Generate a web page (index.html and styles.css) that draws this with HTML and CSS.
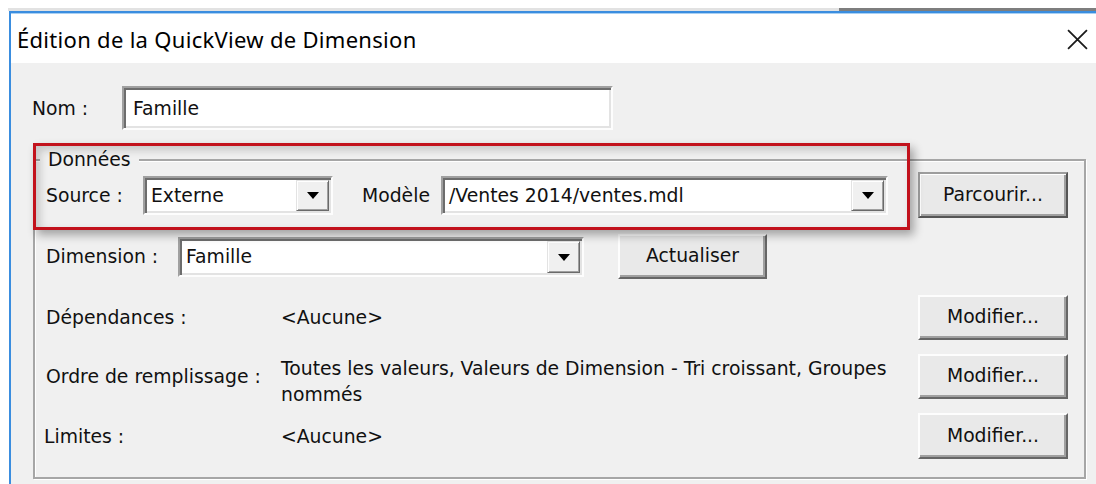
FILE: index.html
```html
<!DOCTYPE html>
<html lang="fr">
<head>
<meta charset="utf-8">
<title>Édition de la QuickView de Dimension</title>
<link rel="stylesheet" href="styles.css">
</head>
<body>
<div class="desk">
  <div class="behind"><span class="behind-light"></span><span class="behind-dark"></span></div>
  <div class="window">
    <div class="titlebar">
      <span class="title">Édition de la QuickView de Dimension</span>
      <svg class="close" viewBox="0 0 20 20" aria-label="Fermer">
        <path d="M1 1 L19 19 M19 1 L1 19" />
      </svg>
    </div>
    <div class="content">
      <div class="name-row">
        <span class="name-label">Nom :</span>
        <div class="field name-field">Famille</div>
      </div>

      <fieldset class="group">
        <legend>Données</legend>
        <div class="group-body">
          <div class="row row-source">
            <span class="source-label">Source :</span>
            <div class="field combo combo-source">
              <span class="combo-value">Externe</span>
              <span class="combo-btn"><i class="arrow"></i></span>
            </div>
            <span class="model-label">Modèle</span>
            <div class="field combo combo-model">
              <span class="combo-value">/Ventes 2014/ventes.mdl</span>
              <span class="combo-btn"><i class="arrow"></i></span>
            </div>
            <button class="btn btn-default btn-browse">Parcourir...</button>
          </div>

          <div class="row row-dimension">
            <span class="dimension-label">Dimension :</span>
            <div class="field combo combo-dimension">
              <span class="combo-value">Famille</span>
              <span class="combo-btn"><i class="arrow"></i></span>
            </div>
            <button class="btn btn-refresh">Actualiser</button>
          </div>

          <div class="props">
            <span class="prop-label">Dépendances :</span>
            <span class="prop-value">&lt;Aucune&gt;</span>
            <button class="btn btn-edit">Modifier...</button>

            <span class="prop-label">Ordre de remplissage :</span>
            <span class="prop-value prop-multi">Toutes les valeurs, Valeurs de Dimension - Tri croissant, Groupes<br>nommés</span>
            <button class="btn btn-edit">Modifier...</button>

            <span class="prop-label prop-label-tight">Limites :</span>
            <span class="prop-value">&lt;Aucune&gt;</span>
            <button class="btn btn-edit">Modifier...</button>
          </div>
        </div>
      </fieldset>

      <div class="highlight"></div>
    </div>
  </div>
</div>
</body>
</html>
```

FILE: styles.css
```css
html, body {
  margin: 0;
  height: 100%;
  overflow: hidden;
  background: #ffffff;
}

body {
  font-family: "DejaVu Sans", "Liberation Sans", sans-serif;
  font-size: 18.8px;
  color: #111;
}

/* desktop area with the edge of another window behind the dialog */
.desk {
  display: flex;
  flex-direction: column;
  height: 100%;
  padding: 8px 0 0 8px;
  box-sizing: border-box;
}

.behind {
  display: flex;
  height: 3px;
  flex: none;
}

.behind-light {
  width: 831px;
  background: #e2e2e2;
}

.behind-dark {
  flex: 1;
  background: #7e7e7e;
}

/* dialog window */
.window {
  flex: 1;
  display: flex;
  flex-direction: column;
  margin-left: 1px;
  border-top: 2px solid #3a8ddf;
  border-left: 2px solid #3a8ddf;
  min-height: 0;
}

.titlebar {
  flex: none;
  height: 50px;
  background: #fff;
  display: flex;
  align-items: center;
  justify-content: space-between;
  padding: 0 8px 0 6px;
  box-shadow: inset 0 1px 0 #a9d0f3;
}

.title {
  font-family: "Noto Sans", "Open Sans", sans-serif;
  font-size: 22px;
  letter-spacing: 0.3px;
  color: #000;
  padding-top: 1px;
}

.close {
  width: 21px;
  height: 21px;
  margin-top: 2px;
}

.close path {
  stroke: #1b1b1b;
  stroke-width: 1.7;
  fill: none;
}

.content {
  position: relative;
  flex: 1;
  background: #f0f0f0;
  padding: 23px 10px 0 21px;
}

/* sunken text fields and combo boxes */
.field {
  box-sizing: border-box;
  background: #fff;
  border: 2px solid;
  border-color: #a0a0a0 #fdfdfd #fdfdfd #a0a0a0;
  box-shadow: inset 2px 2px 0 #6d6d6d, inset -2px -2px 0 #e3e3e3;
  display: flex;
  align-items: center;
}

.name-row {
  display: flex;
  align-items: center;
}

.name-label {
  width: 90px;
}

.name-field {
  width: 491px;
  height: 44px;
  padding-left: 9px;
}

/* group box */
.group {
  margin: 19px 0 0 1px;
  padding: 0;
  min-width: 0;
  border: 2px solid #a6a6a6;
  box-shadow: 1px 1px 0 #fff, inset 1px 1px 0 #fff;
}

.group legend {
  margin-left: 5px;
  padding: 0 8px;
  line-height: 22px;
  background: #f0f0f0;
}

.group-body {
  padding: 1px 16px 18px 11px;
}

.row {
  display: flex;
  align-items: center;
}

.row-source {
  height: 46px;
}

.source-label {
  width: 97px;
}

.combo {
  padding: 2px 2px 2px 6px;
  justify-content: space-between;
}

.combo-value {
  white-space: nowrap;
}

.combo-btn {
  box-sizing: border-box;
  width: 33px;
  align-self: stretch;
  display: flex;
  align-items: center;
  justify-content: center;
  background: #f0f0f0;
  border: 1px solid;
  border-color: #e3e3e3 #6a6a6a #6a6a6a #e3e3e3;
  box-shadow: inset 1px 1px 0 #fff, inset -1px -1px 0 #a0a0a0;
}

.arrow {
  width: 0;
  height: 0;
  border-left: 6px solid transparent;
  border-right: 6px solid transparent;
  border-top: 7px solid #000;
  margin-top: 1px;
}

.combo-source {
  width: 190px;
  height: 39px;
}

.model-label {
  margin-left: 29px;
  width: 79px;
}

.combo-model {
  width: 447px;
  height: 39px;
}

/* raised push buttons */
.btn {
  box-sizing: border-box;
  font: inherit;
  color: #111;
  background: #e9e9e9;
  border: 2px solid;
  border-color: #fdfdfd #666 #666 #fdfdfd;
  box-shadow: inset -2px -2px 0 #a0a0a0;
  padding: 0 0 2px;
  width: 150px;
  height: 45px;
}

.btn-default {
  border-color: #9d9d9d #555 #555 #9d9d9d;
  box-shadow: inset 1px 1px 0 #fff, inset -2px -2px 0 #a0a0a0;
}

.btn-browse {
  margin-left: auto;
  height: 46px;
}

.row-dimension {
  margin-top: 16px;
  height: 45px;
}

.dimension-label {
  width: 132px;
}

.combo-dimension {
  width: 406px;
  height: 40px;
}

.btn-refresh {
  margin-left: 34px;
  width: 149px;
}

/* properties list */
.props {
  margin-top: 16px;
  display: grid;
  grid-template-columns: 235px 1fr 150px;
  grid-template-rows: 45px 45px 46px;
  row-gap: 14px;
  align-items: center;
}

.prop-label-tight {
  margin-left: -2px;
}

.prop-value {
  white-space: nowrap;
}

.prop-multi {
  align-self: start;
  padding-top: 2px;
  line-height: 26px;
}

.btn-edit {
  height: 100%;
}

/* red callout frame around the data source row */
.highlight {
  position: absolute;
  left: 22px;
  top: 80px;
  width: 877px;
  height: 87px;
  box-sizing: border-box;
  border: 3px solid #c2121c;
  box-shadow: 4px 5px 9px rgba(0, 0, 0, 0.33), inset 4px 4px 9px rgba(0, 0, 0, 0.18);
  pointer-events: none;
}
```
